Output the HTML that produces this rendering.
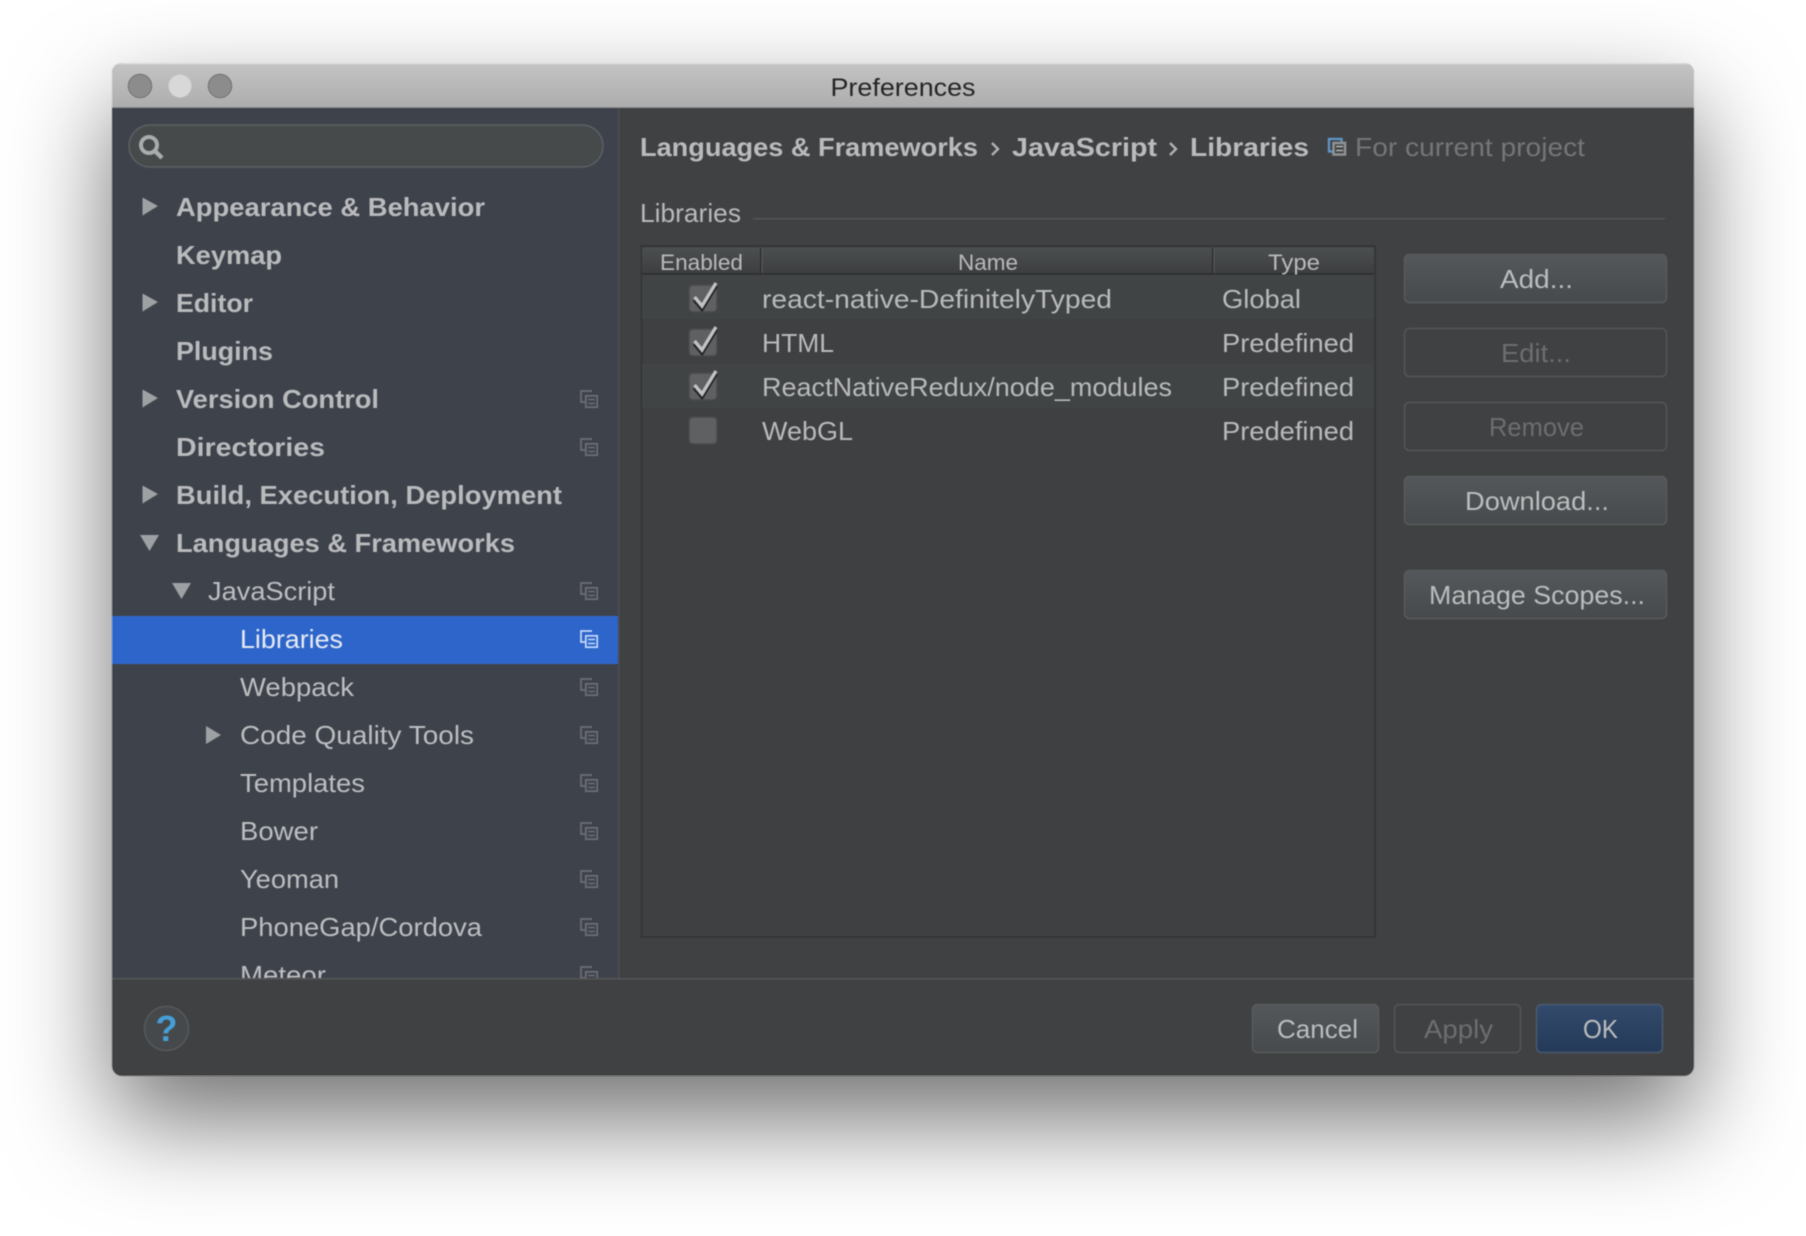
<!DOCTYPE html>
<html><head><meta charset="utf-8"><title>Preferences</title>
<style>
html,body{margin:0;padding:0;background:#fff;width:1806px;height:1236px;overflow:hidden}
#win{position:absolute;left:112px;top:63px;width:1582px;height:1013px;border-radius:10px;box-shadow:0 44px 100px rgba(0,0,0,.56)}
svg{position:absolute;left:0;top:0;filter:blur(.4px)}
text{font-family:"Liberation Sans",sans-serif}
.s{font-size:26px;fill:#bcbec0}
.b{font-weight:bold;fill:#b9bbbd}
.t{font-size:26px;fill:#b8babb}
.h{font-size:22px;fill:#b8babb}
.btn{font-size:26px;fill:#bbbdbe}
.dis{font-size:26px;fill:#6c6e6f}
</style></head><body>
<div id="win"></div>
<svg width="1806" height="1236" viewBox="0 0 1806 1236" xmlns="http://www.w3.org/2000/svg">
<defs>
<linearGradient id="tb" x1="0" y1="0" x2="0" y2="1"><stop offset="0" stop-color="#c4c4c4"/><stop offset="1" stop-color="#adadad"/></linearGradient>
<linearGradient id="btn" x1="0" y1="0" x2="0" y2="1"><stop offset="0" stop-color="#54585a"/><stop offset="1" stop-color="#464a4c"/></linearGradient>
<linearGradient id="ok" x1="0" y1="0" x2="0" y2="1"><stop offset="0" stop-color="#334a6c"/><stop offset="1" stop-color="#243a58"/></linearGradient>
<linearGradient id="hd" x1="0" y1="0" x2="0" y2="1"><stop offset="0" stop-color="#4c4f50"/><stop offset="1" stop-color="#3c3e3f"/></linearGradient>
<clipPath id="wc"><rect x="112" y="63" width="1582" height="1013" rx="10"/></clipPath>
<clipPath id="sc"><rect x="112" y="107" width="507" height="871"/></clipPath>
<symbol id="cp" viewBox="0 0 18 18" overflow="visible"><path d="M12 1H1V12H5" fill="none" stroke="currentColor" stroke-width="1.7"/><rect x="5.8" y="5.8" width="11.4" height="11.4" fill="none" stroke="currentColor" stroke-width="1.7"/><path d="M8 9.5H15M8 13.5H15" stroke="currentColor" stroke-width="1.5"/></symbol>
</defs>
<g clip-path="url(#wc)">
<rect x="112" y="63" width="1582" height="1013" fill="#404142"/>
<rect x="112" y="63" width="1582" height="44" fill="url(#tb)"/>
<rect x="112" y="63" width="1582" height="1.5" fill="#d4d4d4"/>
<rect x="112" y="107" width="1582" height="1" fill="#8f8f8f"/>
<!-- sidebar -->
<rect x="112" y="108" width="507" height="870" fill="#3e424b"/>
<rect x="618" y="108" width="1.5" height="870" fill="#4b4e54"/>
</g>
<circle cx="140" cy="86" r="11.7" fill="#8c8c8d" stroke="#727273" stroke-width="1"/>
<circle cx="180" cy="86" r="11.5" fill="#d8d8d8"/>
<circle cx="220" cy="86" r="11.7" fill="#8c8c8d" stroke="#727273" stroke-width="1"/>
<text x="903" y="96" text-anchor="middle" font-size="25" fill="#252525" textLength="145" lengthAdjust="spacingAndGlyphs">Preferences</text>

<rect x="129" y="125" width="474" height="42" rx="21" fill="#464a4b" stroke="#5c6164" stroke-width="1.5"/>
<circle cx="149" cy="145" r="8" fill="none" stroke="#a8acac" stroke-width="4"/>
<path d="M155 151L162 158" stroke="#a8acac" stroke-width="4.4" fill="none"/>

<g clip-path="url(#sc)">
<rect x="112" y="616" width="506" height="48" fill="#2e65ca"/>
<g class="s b">
<text x="176" y="216" textLength="309" lengthAdjust="spacingAndGlyphs">Appearance &amp; Behavior</text>
<text x="176" y="264" textLength="106" lengthAdjust="spacingAndGlyphs">Keymap</text>
<text x="176" y="312" textLength="77" lengthAdjust="spacingAndGlyphs">Editor</text>
<text x="176" y="360" textLength="97" lengthAdjust="spacingAndGlyphs">Plugins</text>
<text x="176" y="408" textLength="203" lengthAdjust="spacingAndGlyphs">Version Control</text>
<text x="176" y="456" textLength="149" lengthAdjust="spacingAndGlyphs">Directories</text>
<text x="176" y="504" textLength="386" lengthAdjust="spacingAndGlyphs">Build, Execution, Deployment</text>
<text x="176" y="552" textLength="339" lengthAdjust="spacingAndGlyphs">Languages &amp; Frameworks</text>
</g>
<g class="s">
<text x="208" y="600" textLength="127" lengthAdjust="spacingAndGlyphs">JavaScript</text>
<text x="240" y="648" textLength="103" lengthAdjust="spacingAndGlyphs" style="fill:#e6ebf3">Libraries</text>
<text x="240" y="696" textLength="114" lengthAdjust="spacingAndGlyphs">Webpack</text>
<text x="240" y="744" textLength="234" lengthAdjust="spacingAndGlyphs">Code Quality Tools</text>
<text x="240" y="792" textLength="125" lengthAdjust="spacingAndGlyphs">Templates</text>
<text x="240" y="840" textLength="78" lengthAdjust="spacingAndGlyphs">Bower</text>
<text x="240" y="888" textLength="99" lengthAdjust="spacingAndGlyphs">Yeoman</text>
<text x="240" y="936" textLength="242" lengthAdjust="spacingAndGlyphs">PhoneGap/Cordova</text>
<text x="240" y="984" textLength="86" lengthAdjust="spacingAndGlyphs">Meteor</text>
</g>
<g fill="#9ea1a3">
<path d="M142.5 197.500L158 206L142.500 215.500Z"/>
<path d="M142.500 293.500L158 302L142.500 311.500Z"/>
<path d="M142.500 389.500L158 398L142.500 407.500Z"/>
<path d="M142.500 485.500L158 494L142.500 503.500Z"/>
<path d="M140 535L159 535L149.500 551Z"/>
<path d="M172 583L191 583L181.500 599Z"/>
<path d="M206 726L221 735L206 744Z"/>
</g>
<g color="#6c6f75">
<use href="#cp" x="580" y="390" width="18" height="18"/>
<use href="#cp" x="580" y="438" width="18" height="18"/>
<use href="#cp" x="580" y="582" width="18" height="18"/>
<use href="#cp" x="580" y="678" width="18" height="18"/>
<use href="#cp" x="580" y="726" width="18" height="18"/>
<use href="#cp" x="580" y="774" width="18" height="18"/>
<use href="#cp" x="580" y="822" width="18" height="18"/>
<use href="#cp" x="580" y="870" width="18" height="18"/>
<use href="#cp" x="580" y="918" width="18" height="18"/>
<use href="#cp" x="580" y="966" width="18" height="18"/>
</g>
<use href="#cp" x="580" y="630" width="18" height="18" color="#c4dafa"/>
</g>

<!-- breadcrumb -->
<g class="s b">
<text x="640" y="156" textLength="338" lengthAdjust="spacingAndGlyphs">Languages &amp; Frameworks</text>
<text x="1012" y="156" textLength="145" lengthAdjust="spacingAndGlyphs">JavaScript</text>
<text x="1190" y="156" textLength="119" lengthAdjust="spacingAndGlyphs">Libraries</text>
</g>
<path d="M992 143L998 149L992 155M1170 143L1176 149L1170 155" fill="none" stroke="#b0b2b4" stroke-width="2.400"/>
<rect x="1329" y="139" width="12.500" height="12.500" fill="#3c3e3f" stroke="#5e93c4" stroke-width="2.400"/>
<rect x="1333.500" y="143" width="11.500" height="11.500" fill="#3c3e3f" stroke="#8f9192" stroke-width="2.600"/>
<path d="M1336 146.500H1343M1336 150.500H1343" stroke="#a8aaab" stroke-width="1.800"/>
<text x="1355" y="156" font-size="26" fill="#747677" textLength="230" lengthAdjust="spacingAndGlyphs">For current project</text>

<text x="640" y="222" class="t" textLength="101" lengthAdjust="spacingAndGlyphs">Libraries</text>
<rect x="753" y="218" width="912" height="1.500" fill="#525456"/>

<!-- table -->
<rect x="641.500" y="246" width="733.500" height="691" fill="#3f4041" stroke="#323334" stroke-width="1.500"/>
<rect x="642" y="247.500" width="732" height="26" fill="url(#hd)"/>
<rect x="642" y="273" width="732" height="2" fill="#303132"/>
<rect x="642" y="275" width="732" height="44" fill="#414445"/>
<rect x="642" y="364" width="732" height="44" fill="#414445"/>
<rect x="760" y="248" width="1.500" height="25" fill="#2e2f30"/><rect x="761.500" y="248" width="1" height="25" fill="#5c5e5f"/>
<rect x="1212" y="248" width="1.500" height="25" fill="#2e2f30"/><rect x="1213.500" y="248" width="1" height="25" fill="#5c5e5f"/>
<text x="660" y="270" class="h" textLength="83" lengthAdjust="spacingAndGlyphs">Enabled</text>
<text x="958" y="270" class="h" textLength="60" lengthAdjust="spacingAndGlyphs">Name</text>
<text x="1268" y="270" class="h" textLength="52" lengthAdjust="spacingAndGlyphs">Type</text>

<g class="t">
<text x="762" y="308" textLength="350" lengthAdjust="spacingAndGlyphs">react-native-DefinitelyTyped</text>
<text x="762" y="352" textLength="72" lengthAdjust="spacingAndGlyphs">HTML</text>
<text x="762" y="396" textLength="410" lengthAdjust="spacingAndGlyphs">ReactNativeRedux/node_modules</text>
<text x="762" y="440" textLength="91" lengthAdjust="spacingAndGlyphs">WebGL</text>
<text x="1222" y="308" textLength="79" lengthAdjust="spacingAndGlyphs">Global</text>
<text x="1222" y="352" textLength="132" lengthAdjust="spacingAndGlyphs">Predefined</text>
<text x="1222" y="396" textLength="132" lengthAdjust="spacingAndGlyphs">Predefined</text>
<text x="1222" y="440" textLength="132" lengthAdjust="spacingAndGlyphs">Predefined</text>
</g>
<g id="cb">
<rect x="689" y="285" width="28" height="27" rx="4" fill="#5e6061" stroke="#484a4b" stroke-width="1.500"/>
<path d="M694.500 298L702 307L716 284" fill="none" stroke="#232425" stroke-width="4.400" transform="translate(0 1.500)"/>
<path d="M694.500 298L702 307L716 284" fill="none" stroke="#c0c2c3" stroke-width="3.400" transform="translate(0 -1)"/>
</g>
<use href="#cb" y="44"/>
<use href="#cb" y="88"/>
<rect x="689" y="417" width="28" height="27" rx="4" fill="#5e6061" stroke="#484a4b" stroke-width="1.500"/>

<!-- side buttons -->
<rect x="1404.500" y="254.500" width="262" height="48" rx="5" fill="url(#btn)" stroke="#585b5d" stroke-width="1.500"/>
<rect x="1404.500" y="328.500" width="262" height="48" rx="5" fill="#404142" stroke="#535658" stroke-width="1.500"/>
<rect x="1404.500" y="402.500" width="262" height="48" rx="5" fill="#404142" stroke="#535658" stroke-width="1.500"/>
<rect x="1404.500" y="476.500" width="262" height="48" rx="5" fill="url(#btn)" stroke="#585b5d" stroke-width="1.500"/>
<rect x="1404.500" y="570.500" width="262" height="48" rx="5" fill="url(#btn)" stroke="#585b5d" stroke-width="1.500"/>
<text x="1500" y="288" class="btn" textLength="73" lengthAdjust="spacingAndGlyphs">Add...</text>
<text x="1501" y="362" class="dis" textLength="70" lengthAdjust="spacingAndGlyphs">Edit...</text>
<text x="1489" y="436" class="dis" textLength="95" lengthAdjust="spacingAndGlyphs">Remove</text>
<text x="1465" y="510" class="btn" textLength="144" lengthAdjust="spacingAndGlyphs">Download...</text>
<text x="1429" y="604" class="btn" textLength="216" lengthAdjust="spacingAndGlyphs">Manage Scopes...</text>

<!-- footer -->
<rect x="112" y="978" width="1582" height="1.500" fill="#545658"/>
<circle cx="166.500" cy="1028.500" r="22" fill="#46494b" stroke="#56595b" stroke-width="1.500"/>
<text x="166.500" y="1041" text-anchor="middle" font-size="36" font-weight="bold" fill="#459fd6">?</text>
<rect x="1252.500" y="1004.500" width="126" height="48" rx="5" fill="url(#btn)" stroke="#585b5d" stroke-width="1.500"/>
<rect x="1394.500" y="1004.500" width="126" height="48" rx="5" fill="#404142" stroke="#535658" stroke-width="1.500"/>
<rect x="1536.500" y="1004.500" width="126" height="48" rx="5" fill="url(#ok)" stroke="#4a5a70" stroke-width="1.500"/>
<text x="1277" y="1038" class="btn" textLength="81" lengthAdjust="spacingAndGlyphs">Cancel</text>
<text x="1424" y="1038" class="dis" textLength="69" lengthAdjust="spacingAndGlyphs">Apply</text>
<text x="1583" y="1038" class="btn" textLength="35" lengthAdjust="spacingAndGlyphs">OK</text>
</svg>
</body></html>
